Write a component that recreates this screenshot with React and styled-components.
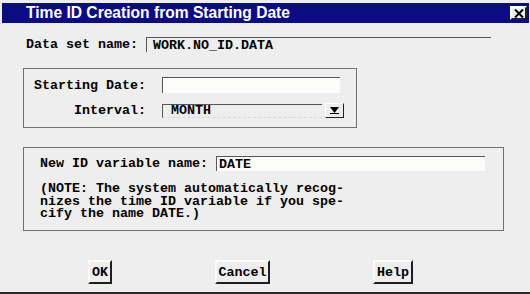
import React from "react";
import styled, { createGlobalStyle } from "styled-components";

const Global = createGlobalStyle`
  html, body {
    margin: 0;
    padding: 0;
    background: #efeeee;
  }
`;

const mono = `"Liberation Mono", "DejaVu Sans Mono", monospace`;

const Window = styled.div`
  width: 530px;
  height: 294px;
  box-sizing: border-box;
  background: #efeeee;
  border-bottom: 2px solid #2a2a2a;
  display: flex;
  flex-direction: column;
  font-family: ${mono};
  font-weight: bold;
  font-size: 13.33px;
  color: #000;
`;

const TitleBar = styled.div`
  margin: 3px 1px 0 2px;
  height: 20px;
  background: #0c0c82;
  display: flex;
  align-items: center;
  justify-content: space-between;
  padding: 0 2px 0 24px;
`;

const Title = styled.span`
  font-family: "Liberation Sans", Arial, sans-serif;
  font-weight: bold;
  font-size: 15.6px;
  color: #fff;
`;

const CloseButton = styled.div`
  width: 13px;
  height: 10px;
  background: #efeeee;
  border: 2px solid;
  border-color: #fff #222 #222 #fff;
  display: flex;
  align-items: center;
  justify-content: center;
`;

const Body = styled.div`
  display: flex;
  flex-direction: column;
  padding: 14px 0 0 23px;
`;

const DataRow = styled.div`
  display: flex;
  align-items: center;
  padding-left: 3px;
`;

const Label = styled.span`
  white-space: pre;
  width: ${(p) => p.$width || "auto"};
  text-align: ${(p) => p.$align || "left"};
`;

const Field = styled.div`
  box-sizing: border-box;
  width: ${(p) => p.$width}px;
  height: ${(p) => p.$height || 15}px;
  margin-left: ${(p) => p.$gap || 0}px;
  background: ${(p) => (p.$white ? "#fcfcfb" : "transparent")};
  border-top: 1px solid #555;
  border-left: 1px solid #555;
  border-bottom: ${(p) => (p.$dotted ? "1px dashed #d8d8d8" : "none")};
  padding-left: ${(p) => p.$pad || 6}px;
  display: flex;
  align-items: center;
  white-space: pre;
`;

const Group = styled.div`
  box-sizing: border-box;
  width: ${(p) => p.$width}px;
  height: ${(p) => p.$height}px;
  margin-top: ${(p) => p.$top}px;
  border: 1px solid #707070;
  padding: ${(p) => p.$pad};
  display: flex;
  flex-direction: column;
`;

const FormRow = styled.div`
  display: flex;
  align-items: center;
  margin-bottom: ${(p) => p.$bottom || 0}px;
`;

const DropButton = styled.div`
  box-sizing: border-box;
  width: 19px;
  height: 15px;
  margin-left: 3px;
  border: 1px solid;
  border-color: #fff #222 #222 #fff;
  display: flex;
  align-items: center;
  justify-content: center;
`;

const Note = styled.div`
  margin-top: 12px;
  line-height: 12.5px;
  white-space: pre;
`;

const ButtonRow = styled.div`
  display: flex;
  gap: 103px;
  padding-left: 65px;
  margin-top: 29px;
`;

const Button = styled.div`
  box-sizing: border-box;
  width: ${(p) => p.$width}px;
  height: 24px;
  border: 2px solid;
  border-color: #fbfbfb #1e1e1e #1e1e1e #fbfbfb;
  display: flex;
  align-items: center;
  justify-content: center;
`;

const App = () => (
  <>
    <Global />
    <Window>
      <TitleBar>
        <Title>Time ID Creation from Starting Date</Title>
        <CloseButton>
          <svg width="10" height="9" viewBox="0 0 10 9">
            <path d="M1 0.5 L9 8.5 M9 0.5 L1 8.5" stroke="#000" strokeWidth="2" />
          </svg>
        </CloseButton>
      </TitleBar>
      <Body>
        <DataRow>
          <Label>Data set name:</Label>
          <Field $width={345} $gap={8}>WORK.NO_ID.DATA</Field>
        </DataRow>

        <Group $width={334} $height={60} $top={16} $pad="8px 0 0 10px">
          <FormRow $bottom={10}>
            <Label $width="115px">Starting Date:</Label>
            <Field $width={178} $height={16} $gap={13} $white />
          </FormRow>
          <FormRow>
            <Label $width="112px" $align="right">Interval:</Label>
            <Field $width={160} $height={14} $gap={16} $pad={8} $dotted>
              MONTH
            </Field>
            <DropButton>
              <svg width="9" height="7" viewBox="0 0 9 7">
                <path d="M0 0 H9 L4.5 6 Z" fill="#000" />
                <rect x="0" y="6" width="9" height="1" fill="#000" />
              </svg>
            </DropButton>
          </FormRow>
        </Group>

        <Group $width={481} $height={84} $top={19} $pad="8px 0 0 16px">
          <FormRow>
            <Label>New ID variable name:</Label>
            <Field $width={269} $height={15} $gap={8} $pad={2} $white>
              DATE
            </Field>
          </FormRow>
          <Note>
            {"(NOTE: The system automatically recog-\nnizes the time ID variable if you spe-\ncify the name DATE.)"}
          </Note>
        </Group>

        <ButtonRow>
          <Button $width={24}>OK</Button>
          <Button $width={55}>Cancel</Button>
          <Button $width={40}>Help</Button>
        </ButtonRow>
      </Body>
    </Window>
  </>
);

export default App;
